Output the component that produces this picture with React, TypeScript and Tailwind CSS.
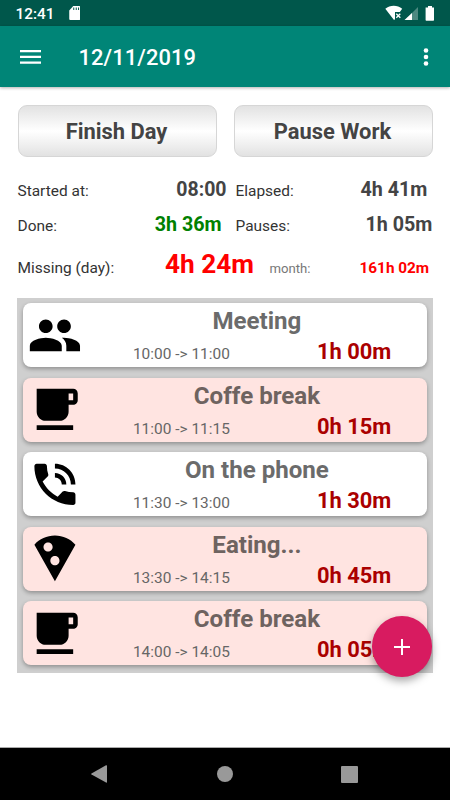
import React from "react";

const ICONS = {
  people:
    "M16 11c1.66 0 2.99-1.34 2.99-3S17.66 5 16 5s-3 1.34-3 3 1.34 3 3 3zm-8 0c1.66 0 2.99-1.34 2.99-3S9.66 5 8 5 5 6.34 5 8s1.34 3 3 3zm0 2c-2.33 0-7 1.17-7 3.5V19h14v-2.5c0-2.33-4.67-3.5-7-3.5zm8 0c-.29 0-.62.02-.97.05 1.16.84 1.97 1.97 1.97 3.45V19h6v-2.5c0-2.33-4.67-3.5-7-3.5z",
  cup: "M20 3H4v10c0 2.21 1.79 4 4 4h6c2.21 0 4-1.79 4-4v-3h2c1.11 0 2-.89 2-2V5c0-1.11-.89-2-2-2zm0 5h-2V5h2v3zM4 19h16v2H4z",
  phone:
    "M20 15.5c-1.25 0-2.45-.2-3.57-.57-.35-.11-.74-.03-1.02.24l-2.2 2.2c-2.83-1.44-5.15-3.75-6.59-6.59l2.2-2.21c.28-.26.36-.65.25-1C8.7 6.45 8.5 5.25 8.5 4c0-.55-.45-1-1-1H4c-.55 0-1 .45-1 1 0 9.39 7.61 17 17 17 .55 0 1-.45 1-1v-3.5c0-.55-.45-1-1-1zM19 12h2c0-4.97-4.03-9-9-9v2c3.87 0 7 3.13 7 7zm-4 0h2c0-2.76-2.24-5-5-5v2c1.66 0 3 1.34 3 3z",
  pizza:
    "M12 2C8.43 2 5.23 3.54 3.01 6L12 22l8.99-16C18.78 3.55 15.57 2 12 2zM7 7c0-1.1.9-2 2-2s2 .9 2 2-.9 2-2 2-2-.9-2-2zm5 8c-1.1 0-2-.9-2-2s.9-2 2-2 2 .9 2 2-.89 2-2 2z",
};

type Entry = {
  icon: keyof typeof ICONS;
  title: string;
  span: string;
  duration: string;
  pause: boolean;
};

const ENTRIES: Entry[] = [
  { icon: "people", title: "Meeting", span: "10:00 -> 11:00", duration: "1h 00m", pause: false },
  { icon: "cup", title: "Coffe break", span: "11:00 -> 11:15", duration: "0h 15m", pause: true },
  { icon: "phone", title: "On the phone", span: "11:30 -> 13:00", duration: "1h 30m", pause: false },
  { icon: "pizza", title: "Eating...", span: "13:30 -> 14:15", duration: "0h 45m", pause: true },
  { icon: "cup", title: "Coffe break", span: "14:00 -> 14:05", duration: "0h 05m", pause: true },
];

function StatusBar() {
  return (
    <div className="flex h-[26px] items-center bg-[#00574b] pl-[15.500px] pr-[15px] text-white">
      <span className="w-[53px] pt-[2px] text-[15.330px] font-medium leading-[26px]">12:41</span>
      <svg width="11.500" height="14" viewBox="0 0 11 14">
        <path fill="#fff" d="M4 0h6a1 1 0 0 1 1 1v12a1 1 0 0 1-1 1H1a1 1 0 0 1-1-1V4.500z" />
        <path stroke="#00574b" strokeWidth="1" d="M4.500 1.500v2.500M7 1.500v2.500M9.300 1.500v2.500" />
      </svg>
      <svg width="50" height="16" viewBox="0 0 50 16" className="ml-auto">
        <path fill="#fff" d="M0.300 3.800C5-.300 12.500-.300 17.200 3.800L14.800 7H10v7.300L9 15z" />
        <path stroke="#fff" strokeWidth="1.300" d="m11.300 8.700 4 4m0-4-4 4" />
        <path fill="#fff" fillOpacity="0.3" d="M33 2v13H20z" />
        <path fill="#fff" d="M27 8v7h-7.500z" />
        <path fill="#fff" d="M43 1h4v1.500h2V15a.7.7 0 0 1-.7.7h-7a.7.7 0 0 1-.7-.7V2.500h2.400z" />
      </svg>
    </div>
  );
}

function AppBar() {
  return (
    <header className="relative flex h-[61px] items-center bg-[#008577] pl-5 pr-[20px] text-white shadow-[0_1px_3px_rgba(0,0,0,0.3)]">
      <svg width="21" height="16" viewBox="0 0 21 16">
        <path fill="#fff" d="M0 1h21v2.300H0zM0 6.700h21V9H0zM0 12.500h21v2.300H0z" />
      </svg>
      <h1 className="ml-[37.500px] pt-[3px] text-[21.900px] font-medium leading-[30px] tracking-[0.100px]">12/11/2019</h1>
      <svg width="8" height="20" viewBox="0 0 8 20" className="ml-auto">
        <circle cx="4" cy="3.500" r="2.300" fill="#fff" />
        <circle cx="4" cy="10" r="2.300" fill="#fff" />
        <circle cx="4" cy="16.500" r="2.300" fill="#fff" />
      </svg>
    </header>
  );
}

function ActionButton({ label }: { label: string }) {
  return (
    <button className="h-[52px] w-[199px] rounded-[9px] border border-[#d6d6d6] bg-linear-to-b from-[#e2e2e2] via-white to-[#e2e2e2] pr-[1px] pt-[2px] text-[21.900px] font-bold leading-[48px] text-[#444]">
      {label}
    </button>
  );
}

function EntryCard({ entry }: { entry: Entry }) {
  return (
    <li
      className={`flex h-16 items-center rounded-[8px] pl-[4.600px] shadow-[0_2px_4px_rgba(0,0,0,0.3)] ${
        entry.pause ? "bg-[#ffe4e1]" : "bg-white"
      }`}
    >
      <svg width="54.750" height="54.750" viewBox="0.200 0 24 24" className="shrink-0">
        <path d={ICONS[entry.icon]} />
      </svg>
      <div className="ml-[4.600px] h-full w-[340px]">
        <div className="h-[35px] pt-px text-center text-[24.100px] font-bold leading-[34px] text-[#6b6b6b]">
          <span className={entry.pause ? "text-[#6e6360]" : ""}>{entry.title}</span>
        </div>
        <div className="flex h-[28px] items-baseline leading-[28px]">
          <span className="ml-[46px] w-[184px] text-[15.450px] font-normal text-[#666]">{entry.span}</span>
          <span className="whitespace-nowrap text-[21.900px] font-bold text-[#aa0000]">{entry.duration}</span>
        </div>
      </div>
    </li>
  );
}

export default function App() {
  return (
    <div className="relative flex h-[800px] w-[450px] flex-col overflow-hidden bg-white font-['Roboto',sans-serif]">
      <StatusBar />
      <AppBar />
      <main className="flex flex-1 flex-col pl-[17.500px]">
        <div className="mt-[18px] flex gap-[17px]">
          <ActionButton label="Finish Day" />
          <ActionButton label="Pause Work" />
        </div>
        <div className="mt-[16px] flex h-[34px] items-baseline whitespace-nowrap text-[19.700px] font-bold leading-[34px] text-[#444]">
          <span className="w-[158.800px] text-[15.450px] font-normal text-[#333]">Started at:</span>
          <span className="w-[59.200px] text-[19.500px]">08:00</span>
          <span className="w-[125px] text-[15.450px] font-normal text-[#333]">Elapsed:</span>
          <span>4h 41m</span>
        </div>
        <div className="mt-px flex h-[34px] items-baseline whitespace-nowrap text-[19.700px] font-bold leading-[34px] text-[#444]">
          <span className="w-[137.300px] text-[15.450px] font-normal text-[#333]">Done:</span>
          <span className="w-[80.700px] text-[#008000]">3h 36m</span>
          <span className="w-[130px] text-[15.450px] font-normal text-[#333]">Pauses:</span>
          <span>1h 05m</span>
        </div>
        <div className="mt-[5px] flex h-[34px] items-baseline whitespace-nowrap font-bold leading-[34px] text-[#f00]">
          <span className="w-[147.500px] text-[15.450px] font-normal text-[#333]">Missing (day):</span>
          <span className="w-[104.500px] text-[26.200px]">4h 24m</span>
          <span className="w-[90px] text-[13.140px] font-normal text-[#777]">month:</span>
          <span className="text-[15.330px]">161h 02m</span>
        </div>
        <ul className="-ml-[0.300px] mt-[17px] flex h-[375px] w-[415.600px] flex-col gap-[10.500px] bg-[#cfcfcf] px-[5.800px] pt-[5.200px]">
          {ENTRIES.map((entry) => (
            <EntryCard key={entry.span} entry={entry} />
          ))}
        </ul>
      </main>
      <button
        aria-label="Add entry"
        className="absolute left-[371.500px] top-[616px] flex h-[61px] w-[60.800px] items-center justify-center rounded-full bg-[#d81b60] shadow-[0_4px_8px_rgba(0,0,0,0.35)]"
      >
        <svg width="16" height="16" viewBox="0 0 16 16">
          <path stroke="#fff" strokeWidth="2" d="M8 0v16M0 8h16" />
        </svg>
      </button>
      <nav className="h-[53px] border-t border-[#aaa] bg-black pt-[17px]">
        <div className="flex items-center pl-[91px]">
          <svg width="16" height="18" viewBox="0 0 16 18">
            <path fill="#999" d="M15 .300q1-.4 1 .7v16q0 1-1 .6L.5 9.500q-.7-.5 0-1z" />
          </svg>
          <span className="ml-[110px] size-[16px] rounded-full bg-[#999]" />
          <span className="ml-[108px] size-[17px] rounded-[1px] bg-[#999]" />
        </div>
      </nav>
    </div>
  );
}
